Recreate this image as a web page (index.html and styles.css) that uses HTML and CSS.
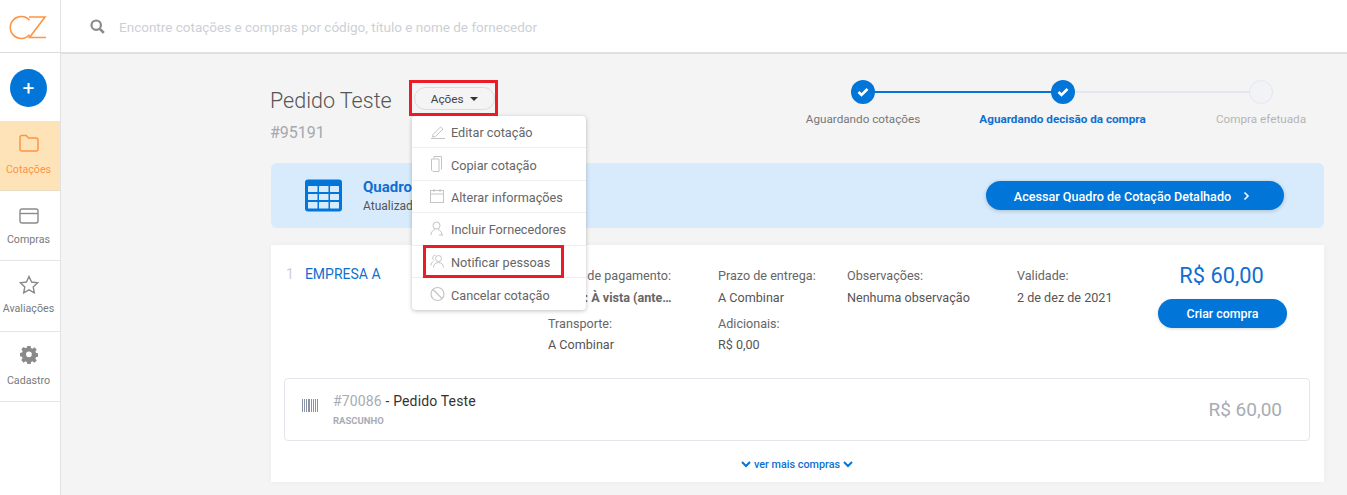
FILE: index.html
```html
<!DOCTYPE html>
<html lang="pt-BR">
<head>
<meta charset="utf-8">
<title>Pedido Teste</title>
<link rel="stylesheet" href="styles.css">
</head>
<body>
<div class="app">
  <aside class="sidebar">
    <div class="logo">
      <svg width="38" height="25" viewBox="0 0 38 25" fill="none" stroke="#ff9442" stroke-width="1.600"><path d="M20.500 5.200A11 11 0 1 0 20.500 19.800"/><path d="M20 2H36L20.500 22.500H37"/></svg>
    </div>
    <div class="add-wrap"><button class="add">+</button></div>
    <nav class="nav">
      <a class="nav-item active">
        <svg width="20" height="18" viewBox="0 0 20 18" fill="none" stroke="#ff9442" stroke-width="1.500"><path d="M1 4V3a1.500 1.500 0 0 1 1.500-1.500h4.800L9.500 4h7.500A2 2 0 0 1 19 6v9a2 2 0 0 1-2 2H3a2 2 0 0 1-2-2z"/></svg>
        <span>Cotações</span>
      </a>
      <a class="nav-item">
        <svg width="20" height="16" viewBox="0 0 20 16" fill="none" stroke="#8a8a8a" stroke-width="1.400"><rect x="1" y="1" width="18" height="14" rx="2"/><path d="M1 5.500h18"/></svg>
        <span>Compras</span>
      </a>
      <a class="nav-item">
        <svg width="20" height="19" viewBox="0 0 20 19" fill="none" stroke="#8a8a8a" stroke-width="1.400"><path d="M10 1.500l2.600 5.500 6 .8-4.400 4.100 1.100 5.900L10 14.900l-5.300 2.900 1.100-5.900L1.400 7.800l6-.8z"/></svg>
        <span>Avaliações</span>
      </a>
      <a class="nav-item">
        <svg width="18" height="18" viewBox="0 0 18 18"><path fill="#8a8a8a" fill-rule="evenodd" d="M7.300 0h3.400l.4 2.400 1.500.7L14.700 1.700l2.400 2.400-1.400 2 .7 1.500 2.400.4v3.400l-2.400.4-.7 1.500 1.400 2-2.400 2.400-2-1.400-1.500.7-.4 2.400H7.300l-.4-2.400-1.500-.7-2 1.400L1 14.900l1.400-2-.7-1.500L-.6 11V7.600l2.400-.4.7-1.500-1.400-2L3.400 1.300l2 1.400 1.500-.7zM9 6a3 3 0 1 0 0 6 3 3 0 0 0 0-6z" transform="translate(.3 -.3) scale(.96)"/></svg>
        <span>Cadastro</span>
      </a>
    </nav>
  </aside>
  <div class="body">
    <header class="topbar">
      <svg class="search-icon" width="15" height="15" viewBox="0 0 15 15" fill="none" stroke="#8a8a8a"><circle cx="6.200" cy="6.200" r="4.700" stroke-width="2.200"/><path d="M9.800 9.800l4 4" stroke-width="2.600"/></svg>
      <span class="search-text">Encontre cotações e compras por código, título e nome de fornecedor</span>
    </header>
    <main class="main">
      <div class="head">
        <div class="title-col">
          <div class="title-row">
            <h1>Pedido Teste</h1>
            <button class="actions">Ações <i class="caret"></i></button>
          </div>
          <div class="code">#95191</div>
        </div>
        <div class="steps">
          <div class="step done">
            <span class="dot"><svg width="12" height="10" viewBox="0 0 12 10" fill="none" stroke="#fff" stroke-width="2.600"><path d="M1.500 5l3 3 6-6"/></svg></span>
            <span class="label">Aguardando cotações</span>
          </div>
          <div class="step current">
            <span class="dot"><svg width="12" height="10" viewBox="0 0 12 10" fill="none" stroke="#fff" stroke-width="2.600"><path d="M1.500 5l3 3 6-6"/></svg></span>
            <span class="label">Aguardando decisão da compra</span>
          </div>
          <div class="step todo">
            <span class="dot"></span>
            <span class="label">Compra efetuada</span>
          </div>
        </div>
      </div>

      <section class="banner">
        <svg class="grid-icon" width="37" height="33" viewBox="0 0 37 33"><rect width="37" height="32" y=".5" rx="3" fill="#0275d8"/><g fill="#d7ebfd"><rect x="3" y="7" width="9.500" height="6" rx=".5"/><rect x="14" y="7" width="9.500" height="6" rx=".5"/><rect x="25" y="7" width="9" height="6" rx=".5"/><rect x="3" y="15" width="9.500" height="6" rx=".5"/><rect x="14" y="15" width="9.500" height="6" rx=".5"/><rect x="25" y="15" width="9" height="6" rx=".5"/><rect x="3" y="23" width="9.500" height="6.500" rx=".5"/><rect x="14" y="23" width="9.500" height="6.500" rx=".5"/><rect x="25" y="23" width="9" height="6.500" rx=".5"/></g></svg>
        <div class="banner-text">
          <strong>Quadro de Cotação</strong>
          <span>Atualizado agora</span>
        </div>
        <a class="banner-btn">Acessar Quadro de Cotação Detalhado <svg width="7" height="10" viewBox="0 0 7 10" fill="none" stroke="#fff" stroke-width="1.600"><path d="M1.500 1.500L5 5 1.500 8.500"/></svg></a>
      </section>

      <section class="card">
        <div class="quote">
          <div class="supplier"><span class="num">1</span><a>EMPRESA A</a></div>
          <div class="fields">
            <div class="field"><label>Forma de pagamento:</label><b>Boleto: À vista (ante…</b></div>
            <div class="field"><label>Prazo de entrega:</label><span>A Combinar</span></div>
            <div class="field"><label>Observações:</label><span>Nenhuma observação</span></div>
            <div class="field"><label>Validade:</label><span>2 de dez de 2021</span></div>
            <div class="field"><label>Transporte:</label><span>A Combinar</span></div>
            <div class="field"><label>Adicionais:</label><span>R$ 0,00</span></div>
          </div>
          <div class="buy">
            <div class="price">R$ 60,00</div>
            <button class="buy-btn">Criar compra</button>
          </div>
        </div>
        <div class="order">
          <svg class="barcode" width="16" height="13" viewBox="0 0 16 13"><path fill="#8a93a6" d="M0 0h1v13H0zM2 0h1v13H2zM4 0h1v13H4zM6 0h2v13H6zM9 0h1v13H9zM11 0h1v13h-1zM13 0h1v13h-1zM15 0h1v13h-1z"/></svg>
          <div class="order-text">
            <div class="order-title"><span>#70086</span> - Pedido Teste</div>
            <div class="order-status">RASCUNHO</div>
          </div>
          <div class="order-price">R$ 60,00</div>
        </div>
        <a class="more"><svg width="10" height="7" viewBox="0 0 10 7" fill="none" stroke="#0275d8" stroke-width="2"><path d="M1 1l4 4 4-4"/></svg> ver mais compras <svg width="10" height="7" viewBox="0 0 10 7" fill="none" stroke="#0275d8" stroke-width="2"><path d="M1 1l4 4 4-4"/></svg></a>
      </section>

      <div class="highlight hl-actions"></div>
      <ul class="menu">
        <li><svg width="16" height="14" viewBox="0 0 16 14" fill="none" stroke="#c4c4c4"><path d="M3 9.500L10.500 2l2.500 2-7.500 7.500-3 .5zM1 13.500h14"/></svg>Editar cotação</li>
        <li><svg width="14" height="17" viewBox="0 0 14 17" fill="none" stroke="#c4c4c4"><path d="M4 1h7.500v13M4 1v2M1.500 3.500H9V16H3l-1.500-1.500z"/></svg>Copiar cotação</li>
        <li><svg width="14" height="14" viewBox="0 0 14 14" fill="none" stroke="#c4c4c4"><rect x=".5" y="1.500" width="13" height="12"/><path d="M.5 5h13M4 0v3M10 0v3"/></svg>Alterar informações</li>
        <li><svg width="14" height="16" viewBox="0 0 14 16" fill="none" stroke="#c4c4c4"><circle cx="6.500" cy="4.500" r="3.500"/><path d="M1 14c0-3 2-5 4-5.500M8 8.500c2 .5 4 2.500 4 5.500"/><path d="M9 14h4"/></svg>Incluir Fornecedores</li>
        <li><svg width="15" height="15" viewBox="0 0 15 15" fill="none" stroke="#c4c4c4"><circle cx="8.500" cy="5" r="3"/><path d="M3.500 14c0-3 2-5 5-5s5 2 5 5M5.500 1.500A3 3 0 0 0 3.500 6.500M1 12c0-2 1-3.500 2.500-4"/></svg>Notificar pessoas</li>
        <li><svg width="15" height="15" viewBox="0 0 15 15" fill="none" stroke="#c4c4c4" stroke-width="1.200"><circle cx="7.500" cy="7.500" r="6.500"/><path d="M3 3l9 9"/></svg>Cancelar cotação</li>
      </ul>
      <div class="highlight hl-notify"></div>
    </main>
  </div>
</div>
</body>
</html>
```
FILE: styles.css
```css
* { box-sizing: border-box; }
html, body { margin: 0; height: 495px; overflow: hidden; }
body { font-family: Roboto, "Liberation Sans", sans-serif; font-size: 13px; color: #666; background: #f4f4f4; }
.app { display: flex; height: 495px; }

.sidebar { width: 61px; flex: none; background: #fff; border-right: 1px solid #e2e2e2; }
.logo { height: 53px; border-bottom: 1px solid #dcdcdc; display: flex; justify-content: center; align-items: center; padding-right: 4px; padding-top: 2px; }
.add-wrap { height: 68px; display: flex; align-items: center; justify-content: center; padding: 1px 3px 0 0; }
.add { width: 37px; height: 38px; border-radius: 50%; border: 0; background: #0275d8; color: #fff; font: 400 21px/36px Roboto, sans-serif; padding: 0; }
.nav-item { display: flex; flex-direction: column; align-items: center; height: 70px; border-bottom: 1px solid #e6e6e6; font-size: 10.700px; color: #7a7a7a; padding-right: 3px; }
.nav-item span { line-height: 13px; }
.nav-item.active { background: #ffe3b8; color: #ff9442; gap: 11px; padding-top: 13px; border-bottom-color: #eadbc4; }
.nav-item:nth-child(2) { padding-top: 17px; gap: 9px; }
.nav-item:nth-child(3) { padding-top: 14px; gap: 8px; height: 71px; }
.nav-item:nth-child(4) { padding-top: 14px; gap: 10px; }

.body { flex: 1; min-width: 0; }
.topbar { height: 54px; background: #fff; border-bottom: 2px solid #e0e0e0; display: flex; align-items: center; padding-left: 29px; gap: 14px; }
.search-text { font-size: 13.500px; color: #ccd0d6; margin-top: 2px; }

.main { position: relative; padding: 0 23px 0 210px; }
.head { display: flex; justify-content: space-between; height: 109px; margin-left: -1px; }
.title-row { display: flex; align-items: flex-start; gap: 22px; padding-top: 33px; }
h1 { margin: 1px 0 0; font-size: 21.500px; font-weight: 300; color: #555; line-height: 26px; }
.actions { width: 81px; height: 23px; border: 1px solid #dcdcdc; border-radius: 12px; background: #f4f4f4; font: 11.800px Roboto, sans-serif; color: #444; padding: 0; display: flex; align-items: center; justify-content: center; gap: 6px; }
.caret { width: 0; height: 0; border: 4px solid transparent; border-top-color: #333; border-bottom: 0; }
.code { font-size: 16px; color: #a4a8b0; margin-top: 9px; line-height: 20px; }

.steps { display: flex; padding-top: 26px; margin-right: 18px; }
.step { display: flex; flex-direction: column; align-items: center; position: relative; font-size: 11.700px; color: #777; }
.step:nth-child(1) { width: 114px; }
.step:nth-child(2) { width: 167px; margin-left: 59px; }
.step:nth-child(3) { width: 90px; margin-left: 70px; }
.dot { width: 24px; height: 24px; border-radius: 50%; background: #0275d8; display: flex; align-items: center; justify-content: center; position: relative; z-index: 1; }
.label { margin-top: 8px; line-height: 14px; white-space: nowrap; }
.current .label { font-weight: 700; color: #0f6fd0; }
.todo { color: #b4b4b4; }
.todo .dot { background: #f2f3f7; border: 1px solid #e4e7ee; }
.step + .step::before { content: ""; position: absolute; top: 11px; right: 50%; height: 2px; }
.current::before { width: 195px; background: #0275d8; }
.todo::before { width: 195px; background: #e4e7ec; }

.banner { height: 65px; background: #d7ebfd; border-radius: 6px; display: flex; align-items: center; padding: 0 40px 0 34px; }
.banner-text { display: flex; flex-direction: column; margin-left: 21px; gap: 3px; white-space: nowrap; }
.banner-text strong { font-size: 15px; color: #0f6fd0; line-height: 17px; }
.banner-text span { font-size: 12px; color: #555; line-height: 14px; }
.banner-btn { margin-left: auto; width: 298px; height: 29px; border-radius: 15px; background: #0275d8; color: #fff; font-size: 12.600px; font-weight: 500; display: flex; align-items: center; justify-content: center; gap: 12px; padding: 1px 6px 0 0; box-shadow: 0 1px 4px rgba(0,0,0,.2); }

.card { background: #fff; margin-top: 17px; height: 237px; padding: 0 14px 0 13px; box-shadow: 0 0 6px rgba(0,0,0,.04); }
.quote { display: flex; height: 133px; }
.supplier { width: 264px; padding: 21px 0 0 2px; display: flex; gap: 11px; font-size: 14px; line-height: 17px; flex: none; }
.supplier .num { color: #c8d0da; }
.supplier a { color: #0f6fd0; }
.fields { display: grid; grid-template-columns: 170px 129px 170px 130px; grid-auto-rows: 47.500px; padding-top: 23px; flex: none; }
.field { display: flex; flex-direction: column; gap: 7px; font-size: 12.600px; line-height: 15px; white-space: nowrap; }
.field:nth-child(n+5) { gap: 6px; }
.field label { color: #666; }
.field span { color: #555; }
.field b { color: #666; font-weight: 700; }
.buy { flex: 1; display: flex; flex-direction: column; align-items: center; padding-top: 18px; margin-right: 12px; }
.price { font-size: 21.800px; color: #0f6fd0; line-height: 26px; margin-right: 2px; }
.buy-btn { margin-top: 10px; width: 129px; height: 29px; border: 0; border-radius: 15px; background: #0275d8; color: #fff; font: 500 12.400px Roboto, sans-serif; box-shadow: 0 1px 3px rgba(0,0,0,.15); }

.order { height: 63px; border: 1px solid #e4e6ec; border-radius: 4px; display: flex; align-items: center; padding: 0 27px 0 17px; }
.barcode { flex: none; margin-top: -8px; }
.order-text { margin-left: 15px; }
.order-title { font-size: 14px; color: #333; line-height: 18px; letter-spacing: .15px; }
.order-title span { color: #a8acb4; }
.order-status { font-size: 9.500px; font-weight: 700; color: #a8acb4; margin-top: 4px; line-height: 13px; }
.order-price { margin-left: auto; font-size: 19px; color: #a8acb4; }
.more { display: flex; justify-content: center; align-items: center; gap: 3px; margin-top: 17px; font-size: 10.800px; font-weight: 500; color: #0f6fd0; line-height: 13px; }

.menu { position: absolute; left: 351px; top: 62px; width: 174px; margin: 0; padding: 0; list-style: none; background: #fff; border-radius: 4px; box-shadow: 0 1px 4px rgba(0,0,0,.25); z-index: 2; }
.menu li { height: 32.400px; display: flex; align-items: center; padding: 2px 0 0 39px; font-size: 12.700px; color: #666; position: relative; border-bottom: 1px solid #eee; }
.menu li:last-child { border-bottom: 0; }
.menu li svg { position: absolute; left: 18px; top: 50%; transform: translateY(-50%); }
.highlight { position: absolute; border: 3px solid #ed1c24; z-index: 3; }
.hl-actions { left: 348px; top: 26px; width: 89px; height: 36px; }
.hl-notify { left: 362px; top: 191px; width: 141px; height: 33px; }
```
